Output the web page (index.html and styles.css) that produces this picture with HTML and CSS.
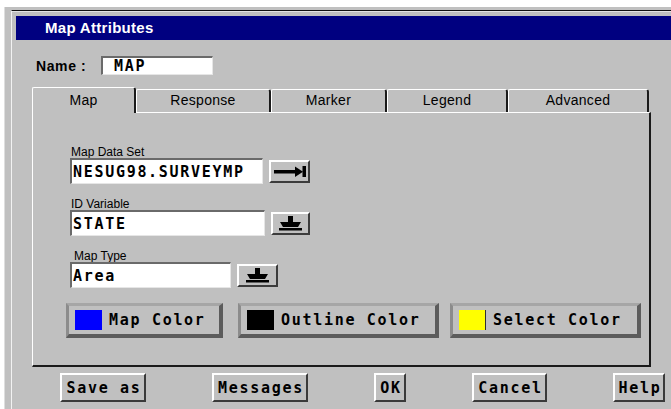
FILE: index.html
```html
<!DOCTYPE html>
<html lang="en">
<head>
<meta charset="utf-8">
<title>Map Attributes</title>
<link rel="stylesheet" href="styles.css">
</head>
<body>
<div class="desk">
  <div class="screen">
    <div class="win">
      <div class="title">Map Attributes</div>

      <div class="name-row">
        <span class="name-label">Name :</span>
        <div class="entry name-entry">MAP</div>
      </div>

      <div class="notebook">
        <div class="tabs">
          <div class="tab tab-active tab-map">Map</div>
          <div class="tab tab-response">Response</div>
          <div class="tab tab-marker">Marker</div>
          <div class="tab tab-legend">Legend</div>
          <div class="tab tab-advanced">Advanced</div>
        </div>

        <div class="panel">
          <div class="fields">
            <div class="field">
              <div class="field-label">Map Data Set</div>
              <div class="field-row">
                <div class="entry entry-dataset">NESUG98.SURVEYMP</div>
                <button class="tool tool-wide" type="button" aria-label="Select data set">
                  <svg width="32" height="11" viewBox="0 0 32 11">
                    <rect x="0" y="4" width="24" height="3.5" fill="#000"/>
                    <polygon points="21,0.5 29,5.75 21,11" fill="#000"/>
                    <rect x="28.5" y="0" width="3.5" height="11" fill="#000"/>
                  </svg>
                </button>
              </div>
            </div>

            <div class="field">
              <div class="field-label">ID Variable</div>
              <div class="field-row">
                <div class="entry entry-id">STATE</div>
                <button class="tool" type="button" aria-label="Choose variable">
                  <svg width="23" height="15" viewBox="0 0 23 15">
                    <rect x="9" y="0" width="5" height="7" fill="#000"/>
                    <polygon points="1,6 22,6 19,11 4,11" fill="#000"/>
                    <rect x="0" y="12" width="23" height="2.5" fill="#000"/>
                  </svg>
                </button>
              </div>
            </div>

            <div class="field field-type">
              <div class="field-label">Map Type</div>
              <div class="field-row">
                <div class="entry entry-type">Area</div>
                <button class="tool tool-wide" type="button" aria-label="Choose map type">
                  <svg width="23" height="15" viewBox="0 0 23 15">
                    <rect x="9" y="0" width="5" height="7" fill="#000"/>
                    <polygon points="1,6 22,6 19,11 4,11" fill="#000"/>
                    <rect x="0" y="12" width="23" height="2.5" fill="#000"/>
                  </svg>
                </button>
              </div>
            </div>
          </div>

          <div class="colors">
            <button class="color-btn color-map" type="button"><span class="swatch swatch-blue"></span>Map Color</button>
            <button class="color-btn color-outline" type="button"><span class="swatch swatch-black"></span>Outline Color</button>
            <button class="color-btn color-select" type="button"><span class="swatch swatch-yellow"></span>Select Color</button>
          </div>
        </div>
      </div>

      <div class="actions">
        <button class="act-btn act-save" type="button">Save as</button>
        <button class="act-btn act-messages" type="button">Messages</button>
        <button class="act-btn act-ok" type="button">OK</button>
        <button class="act-btn act-cancel" type="button">Cancel</button>
        <button class="act-btn act-help" type="button">Help</button>
      </div>
    </div>
  </div>
</div>
</body>
</html>
```

FILE: styles.css
```css
* {
  box-sizing: border-box;
}

html, body {
  margin: 0;
  padding: 0;
  background: #ffffff;
}

body {
  width: 671px;
  height: 409px;
  overflow: hidden;
  font-family: "Liberation Sans", Arial, sans-serif;
  color: #000;
}

/* desktop backdrop and window frame */
.desk {
  height: 409px;
  padding: 7px 0 0 4px;
}

.screen {
  height: 402px;
  background: #c0c0c0;
  padding: 3px 0 0 6px;
  border-left: 1px solid #dedede;
}

.win {
  height: 100%;
  border-top: 1px solid #111;
  border-left: 1px solid #f2f2f2;
  box-shadow: inset 0 1px 0 #e4e4e4;
}

.title {
  margin: 5px 0 0 4px;
  height: 24px;
  background: #000080;
  color: #fff;
  font-weight: bold;
  font-size: 15px;
  letter-spacing: 0.3px;
  line-height: 24px;
  padding-left: 29px;
}

/* shared monospace face for values and push buttons */
.entry,
.color-btn,
.act-btn {
  font-family: "DejaVu Sans Mono", "Liberation Mono", monospace;
  font-weight: bold;
  font-size: 15px;
  letter-spacing: 1.7px;
  color: #000;
  white-space: nowrap;
}

/* sunken text entries */
.entry {
  background: #fff;
  border-style: solid;
  border-width: 2px 1px 1px 2px;
  border-color: #6a6a6a #e6e6e6 #e6e6e6 #6a6a6a;
  display: flex;
  align-items: center;
  padding-left: 1px;
}

.name-row {
  display: flex;
  align-items: center;
  margin-top: 16px;
  padding-left: 24px;
  height: 19px;
}

.name-label {
  width: 65px;
  font-weight: bold;
  font-size: 14px;
  letter-spacing: 0.6px;
}

.name-entry {
  width: 112px;
  height: 19px;
  padding-left: 11px;
}

/* tabbed notebook */
.notebook {
  margin: 12px 0 0 20px;
  width: 619px;
}

.tabs {
  display: flex;
  align-items: flex-end;
  height: 25px;
}

.tab {
  height: 23px;
  border-top: 1px solid #fff;
  border-left: 1px solid #fff;
  border-right: 2px solid #1a1a1a;
  border-top-left-radius: 2px;
  border-top-right-radius: 3px;
  text-align: center;
  font-size: 14px;
  letter-spacing: 0.3px;
  line-height: 21px;
  background: #c0c0c0;
}

.tab-active {
  height: 26px;
  margin-bottom: -1px;
  position: relative;
  z-index: 1;
  line-height: 24px;
}

.tab-map { width: 104px; }
.tab-response { width: 135px; }
.tab-marker { width: 116px; }
.tab-legend { width: 121px; }
.tab-advanced { width: 141px; }

.panel {
  height: 255px;
  border-top: 1px solid #fff;
  border-left: 1px solid #fff;
  border-right: 2px solid #1a1a1a;
  border-bottom: 2px solid #1a1a1a;
}

.fields {
  padding: 33px 0 0 37px;
}

.field + .field {
  margin-top: 14px;
}

.field-label {
  font-size: 12px;
  line-height: 12px;
  height: 12px;
  padding-left: 1px;
  white-space: nowrap;
}

.field-type .field-label {
  padding-left: 4px;
}

.field-row {
  display: flex;
  align-items: center;
  gap: 6px;
}

.entry-dataset { width: 193px; height: 26px; }
.entry-id { width: 195px; height: 26px; }
.entry-type { width: 161px; height: 26px; }

/* raised tool buttons beside entries */
.tool {
  width: 39px;
  height: 23px;
  padding: 0;
  margin: 0;
  background: #c0c0c0;
  border-style: solid;
  border-width: 2px;
  border-color: #fff #3c3c3c #3c3c3c #fff;
  display: flex;
  align-items: center;
  justify-content: center;
}

.tool-wide {
  width: 41px;
}

.tool svg {
  display: block;
}

/* colour chooser buttons */
.colors {
  display: flex;
  margin: 15px 0 0 33px;
}

.color-btn {
  height: 35px;
  margin: 0;
  padding: 0 0 0 6px;
  background: #c0c0c0;
  border-style: solid;
  border-width: 3px 4px 4px 3px;
  border-color: #a6a6a6 #5c5c5c #5c5c5c #8c8c8c;
  display: flex;
  align-items: center;
  gap: 7px;
}

.color-map { width: 157px; }
.color-outline { width: 201px; margin-left: 15px; }
.color-select { width: 191px; margin-left: 11px; }

.swatch {
  width: 27px;
  height: 20px;
  flex: none;
}

.swatch-blue { background: #0000ff; }
.swatch-black { background: #000; }
.swatch-yellow { background: #ffff00; border-right: 1px solid #303030; }

/* dialog action buttons */
.actions {
  display: flex;
  gap: 66px;
  margin-top: 6px;
  padding-left: 48px;
}

.act-btn {
  height: 29px;
  margin: 0;
  padding: 0 0 0 2px;
  background: #c0c0c0;
  border-style: solid;
  border-width: 2px;
  border-color: #fff #3a3a3a #3a3a3a #fff;
}

.act-save { width: 86px; }
.act-messages { width: 96px; }
.act-ok { width: 32px; }
.act-cancel { width: 75px; }
.act-help { width: 52px; }
```
